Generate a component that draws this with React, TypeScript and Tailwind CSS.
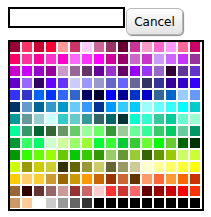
const colors = [
  '990033', 'ff3366', 'cc0033', 'ff0033', 'ff9999', 'cc3366', 'ffccff', 'cc6699', '993366', '660033', 'cc3399', 'ff99cc', 'ff66cc', 'ff99ff', 'ff6699', 'cc0066',
  'ff0066', 'ff3399', 'ff0099', 'ff33cc', 'ff00cc', 'ff66ff', 'ff33ff', 'ff00ff', 'cc0099', '990066', 'cc66cc', 'cc33cc', 'cc99ff', 'cc66ff', 'cc33ff', '993399',
  'cc00cc', 'cc00ff', '9900cc', '990099', 'cc99cc', '996699', '663366', '660099', '9933cc', '660066', '9900ff', '9933ff', '9966cc', '330033', '663399', '6633cc',
  '6600cc', '9966ff', '330066', '6600ff', '6633ff', 'ccccff', '9999ff', '9999cc', '6666cc', '6666ff', '666699', '333366', '333399', '330099', '3300cc', '3300ff',
  '3333ff', '3333cc', '0066ff', '0033ff', '3366ff', '3366cc', '000066', '000033', '0000ff', '000099', '0033cc', '0000cc', '336699', '0066cc', '99ccff', '6699ff',
  '003366', '6699cc', '006699', '3399cc', '0099cc', '66ccff', '3399ff', '003399', '0099ff', '33ccff', '00ccff', '99ffff', '66ffff', '33ffff', '00ffff', '00cccc',
  '009999', '669999', '99cccc', 'ccffff', '33cccc', '66cccc', '339999', '336666', '006666', '003333', '00ffcc', '33ffcc', '33cc99', '00cc99', '66ffcc', '99ffcc',
  '00ff99', '339966', '006633', '336633', '669966', '66cc66', '99ff99', '66ff66', '339933', '99cc99', '66ff99', '33ff99', '33cc66', '00cc66', '66cc99', '009966',
  '009933', '33ff66', '00ff66', 'ccffcc', 'ccff99', '99ff66', '99ff33', '00ff33', '33ff33', '00cc33', '33cc33', '66ff33', '00ff00', '66cc33', '006600', '003300',
  '009900', '33ff00', '66ff00', '99ff00', '66cc00', '00cc00', '33cc00', '339900', '99cc66', '669933', '99cc33', '336600', '669900', '99cc00', 'ccff66', 'ccff33',
  'ccff00', '999900', 'cccc00', 'cccc33', '333300', '666600', '999933', 'cccc66', '666633', '999966', 'cccc99', 'ffffcc', 'ffff99', 'ffff66', 'ffff33', 'ffff00',
  'ffcc00', 'ffcc66', 'ffcc33', 'cc9933', '996600', 'cc9900', 'ff9900', 'cc6600', '993300', 'cc6633', '663300', 'ff9966', 'ff6633', 'ff9933', 'ff6600', 'cc3300',
  '996633', '330000', '663333', '996666', 'cc9999', '993333', 'cc6666', 'ffcccc', 'ff3333', 'cc3333', 'ff6666', '660000', '990000', 'cc0000', 'ff0000', 'ff3300',
  'cc9966', 'ffcc99', 'ffffff', 'cccccc', '999999', '666666', '333333', '000000', '000000', '000000', '000000', '000000', '000000', '000000', '000000', '000000',
];

export default function App() {
  return (
    <div className="min-h-screen bg-white pl-2 pt-[7px] font-['DejaVu_Sans',sans-serif]">
      {/* Input + cancel */}
      <div className="flex items-start">
        <input
          type="text"
          className="h-[21px] w-[117px] border-2 border-black bg-white px-1 text-[12px] outline-none"
        />
        <button
          type="button"
          className="ml-[1px] mt-[1px] flex h-[27px] w-[57px] items-center justify-center rounded-[5px] border border-[#b8b8b8] bg-gradient-to-b from-white to-[#e4e4e4] text-[12px] text-black shadow-[1px_1px_1px_rgba(0,0,0,0.45)]"
        >
          Cancel
        </button>
      </div>

      {/* Swatch palette */}
      <div className="mt-[5px] inline-grid grid-cols-[repeat(16,10px)] gap-[2px] border-2 border-black pb-[1px] pr-[2px]">
        {colors.map((c, i) => (
          <div key={i} className="h-[10px] w-[10px]" style={{ backgroundColor: `#${c}` }} />
        ))}
      </div>
    </div>
  );
}
